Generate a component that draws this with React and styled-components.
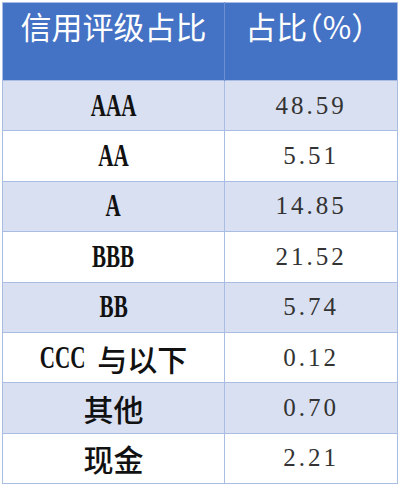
import React from 'react';
import styled, { createGlobalStyle } from 'styled-components';

const rows = [
    { name: 'AAA', value: '48.59' },
    { name: 'AA', value: '5.51' },
    { name: 'A', value: '14.85' },
    { name: 'BBB', value: '21.52' },
    { name: 'BB', value: '5.74' },
    { name: 'CCC', suffix: '与以下', value: '0.12' },
    { name: '其他', value: '0.70', cjk: true },
    { name: '现金', value: '2.21', cjk: true },
];

function App(){
    return (
        <>
            <GlobalStyle/>
            <Page>
                <Table>
                    <thead>
                        <tr>
                            <HeadCell>信用评级占比</HeadCell>
                            <HeadCell $narrowPunct>占比（%）</HeadCell>
                        </tr>
                    </thead>
                    <tbody>
                        {rows.map((row, i) => (
                            <Row key={row.name} $shaded={i % 2 === 0}>
                                <NameCell>
                                    {row.cjk
                                        ? <Cjk>{row.name}</Cjk>
                                        : <Latin $n={row.name.length}>{row.name}</Latin>}
                                    {row.suffix && <Cjk $gap>{row.suffix}</Cjk>}
                                </NameCell>
                                <ValueCell>{row.value}</ValueCell>
                            </Row>
                        ))}
                    </tbody>
                </Table>
            </Page>
        </>
    )
}

const GlobalStyle = createGlobalStyle`
    html, body {
        margin: 0;
        padding: 0;
        background: #ffffff;
    }
    body {
        font-family: "Noto Sans CJK SC", "Noto Sans", sans-serif;
    }
`;

const Page = styled.div`
    padding: 2px 0 0 2px;
`;

const Table = styled.table`
    width: 396px;
    border-collapse: collapse;
    table-layout: fixed;
    border: 1.5px solid #a9bce2;

    & td, & th {
        padding: 0;
    }
    & th:first-child, & td:first-child { width: 222px; }
`;

const HeadCell = styled.th`
    height: 78px;
    box-sizing: border-box;
    padding: 1px ${p => p.$narrowPunct ? '10px' : '0'} 0 0 !important;
    vertical-align: top;
    background: #4472c4;
    color: #ffffff;
    font-family: "Noto Sans CJK SC", sans-serif;
    font-weight: 400;
    font-size: 31px;
    line-height: 44px;
    text-align: center;
    border-right: 1px solid #6b8fd0;
    font-feature-settings: ${p => p.$narrowPunct ? '"halt"' : 'normal'};
    &:last-child { border-right: none; }
`;

const Row = styled.tr`
    height: 50.4px;
    background: ${p => p.$shaded ? '#d9e0f1' : '#ffffff'};

    & td {
        border: 1.5px solid #a9bce2;
    }
`;

const NameCell = styled.td`
    text-align: center;
    vertical-align: middle;
    color: #111111;
    white-space: nowrap;
`;

const Latin = styled.span`
    display: inline-block;
    font-family: "Liberation Serif", serif;
    font-weight: 700;
    font-size: 31px;
    line-height: 30px;
    transform: scaleX(0.68);
    margin: 0 ${p => -(0.32 * 0.722 * 31 * p.$n) / 2}px;
    vertical-align: middle;
`;

const Cjk = styled.span`
    display: inline-block;
    font-family: "Noto Sans CJK SC", sans-serif;
    font-weight: 500;
    font-size: 30px;
    line-height: 36px;
    margin-left: ${p => p.$gap ? '12px' : '0'};
    vertical-align: middle;
`;

const ValueCell = styled.td`
    text-align: center;
    vertical-align: middle;
    font-family: "Liberation Serif", serif;
    font-size: 25px;
    letter-spacing: 3px;
    color: #333333;
`;

export default App;
